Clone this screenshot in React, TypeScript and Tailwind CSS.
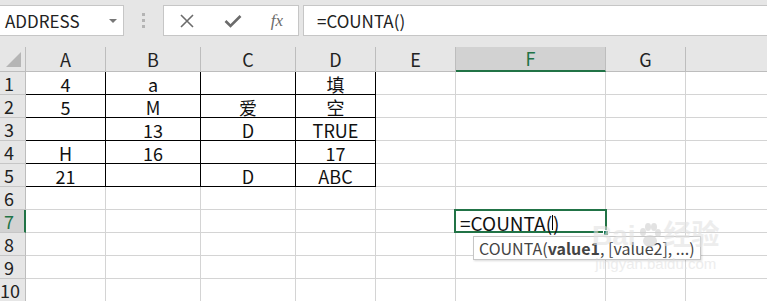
import React from "react";

const font = { fontFamily: '"Noto Sans CJK SC", "Noto Sans", sans-serif' };

const cols = ["A", "B", "C", "D", "E", "F", "G", ""];
const widths = ["w-[80px]", "w-[95px]", "w-[95px]", "w-[80px]", "w-[80px]", "w-[150px]", "w-[80px]", "w-[82px]"];

const data: string[][] = [
  ["4", "a", "", "填"],
  ["5", "M", "爱", "空"],
  ["", "13", "D", "TRUE"],
  ["H", "16", "", "17"],
  ["21", "", "D", "ABC"],
];

function Toolbar() {
  return (
    <div className="h-[47px] flex items-start pt-[5px]">
      <div className="w-[124px] h-[31px] bg-white border border-l-0 border-[#c6c6c6] flex items-center justify-between pl-[5px] pr-[6px]">
        <span className="text-[17px] text-[#222]">ADDRESS</span>
        <span className="w-0 h-0 border-l-[4px] border-r-[4px] border-t-[4px] border-l-transparent border-r-transparent border-t-[#777]" />
      </div>
      <div className="w-[39px] h-[31px] flex flex-col items-center justify-center gap-[3px]">
        <span className="w-[3px] h-[3px] bg-[#b4b4b4]" />
        <span className="w-[3px] h-[3px] bg-[#b4b4b4]" />
        <span className="w-[3px] h-[3px] bg-[#b4b4b4]" />
      </div>
      <div className="w-[136px] h-[31px] bg-white border border-[#c6c6c6] flex items-center">
        <div className="w-[45px] flex justify-center">
          <svg width="14" height="14" viewBox="0 0 14 14">
            <path d="M1 1 L13 13 M13 1 L1 13" stroke="#6b6b6b" strokeWidth="1.6" fill="none" />
          </svg>
        </div>
        <div className="w-[47px] flex justify-center">
          <svg width="18" height="14" viewBox="0 0 18 14">
            <path d="M1.5 7 L6.5 12 L16.5 2" stroke="#6b6b6b" strokeWidth="2.6" fill="none" />
          </svg>
        </div>
        <div className="w-[42px] flex justify-center">
          <span className="text-[17px] italic text-[#6b6b6b]" style={{ fontFamily: '"Liberation Serif", serif' }}>
            fx
          </span>
        </div>
      </div>
      <div className="ml-[4px] flex-1 h-[31px] bg-white border border-r-0 border-[#c6c6c6] flex items-center pl-[13px]">
        <span className="text-[17px] text-[#222]">=COUNTA()</span>
      </div>
    </div>
  );
}

function HeaderRow() {
  return (
    <div className="flex h-[25px]">
      <div className="w-[26px] shrink-0 border-r border-b border-[#bdbdbd] flex items-end justify-end pr-[4px] pb-[4px]">
        <svg width="15" height="15" viewBox="0 0 15 15">
          <path d="M15 0 L15 15 L0 15 Z" fill="#b5b5b5" />
        </svg>
      </div>
      {cols.map((c, i) =>
        c === "F" ? (
          <div key={i} className={`${widths[i]} shrink-0 bg-[#d2d2d2] border-r border-[#bdbdbd] border-b-2 border-b-[#217346] flex items-center justify-center text-[18px] text-[#217346]`}>
            {c}
          </div>
        ) : (
          <div key={i} className={`${widths[i]} shrink-0 border-r border-b border-[#bdbdbd] flex items-center justify-center text-[18px] text-[#222]`}>
            {c}
          </div>
        )
      )}
    </div>
  );
}

function SelectedCell() {
  return (
    <div className="relative h-full">
      <div className="absolute -left-[2px] -top-[2px] -right-[2px] -bottom-[1px] border-2 border-[#217346]" />
      <div className="absolute -right-[4px] -bottom-[4px] w-[6px] h-[6px] bg-[#217346] border border-white" />
      <div className="absolute left-[4px] top-0 h-[22px] flex items-center text-[19px] text-[#111] leading-none">
        <span>=COUNTA(</span>
        <span className="w-px h-[15px] bg-black" />
        <span>)</span>
      </div>
      <div className="absolute left-[17px] top-[25px] h-[24px] bg-white border border-[#c6c6c6] shadow-[1px_1px_2px_rgba(0,0,0,0.15)] flex items-center px-[5px] whitespace-nowrap text-[16px] text-[#444] z-10">
        <span>COUNTA(</span>
        <span className="font-bold">value1</span>
        <span>, [value2], ...)</span>
      </div>
    </div>
  );
}

function Row({ n }: { n: number }) {
  const vals = data[n - 1] || [];
  const sel = n === 7;
  return (
    <div className="flex h-[23px]">
      <div
        className={`w-[26px] shrink-0 border-b border-[#c6c6c6] flex items-center ${
          sel ? "bg-[#d2d2d2] border-r-2 border-r-[#217346] text-[#217346]" : "border-r border-r-[#bdbdbd] text-[#222]"
        }`}
      >
        <span className="w-[18px] text-center text-[18px] leading-none">{n}</span>
      </div>
      {cols.map((_, i) => {
        const inData = n <= 5 && i < 4;
        return (
          <div
            key={i}
            className={`${widths[i]} shrink-0 bg-white border-r border-b ${
              inData ? "border-black" : "border-[#d4d4d4]"
            } flex items-center justify-center text-[18px] text-[#111] leading-none pt-[1px]`}
          >
            {sel && i === 5 ? <div className="w-full h-full"><SelectedCell /></div> : vals[i] || ""}
          </div>
        );
      })}
    </div>
  );
}

export default function App() {
  return (
    <div className="w-[767px] h-[301px] overflow-hidden bg-[#e6e6e6] relative" style={font}>
      <Toolbar />
      <HeaderRow />
      {[1, 2, 3, 4, 5, 6, 7, 8, 9, 10].map((n) => (
        <Row key={n} n={n} />
      ))}
      {/* faint watermark */}
      <div className="absolute left-[592px] top-[222px] flex flex-col items-center pointer-events-none z-20 text-[#e2e2e2] opacity-60">
        <div className="flex items-center gap-[2px] text-[28px] font-bold leading-none" style={{ fontFamily: '"Liberation Sans", "Noto Sans CJK SC", sans-serif' }}>
          <span>Bai</span>
          <svg width="24" height="26" viewBox="0 0 24 26">
            <ellipse cx="5" cy="9" rx="3" ry="4" fill="#d0d0d0" />
            <ellipse cx="10" cy="4" rx="3" ry="4" fill="#d0d0d0" />
            <ellipse cx="16" cy="4" rx="3" ry="4" fill="#d0d0d0" />
            <ellipse cx="20" cy="10" rx="3" ry="4" fill="#d0d0d0" />
            <ellipse cx="12" cy="18" rx="7" ry="6" fill="#d0d0d0" />
          </svg>
          <span>经验</span>
        </div>
        <span className="text-[15px] leading-none mt-[6px]" style={{ fontFamily: '"Liberation Sans", sans-serif' }}>
          jingyan.baidu.com
        </span>
      </div>
    </div>
  );
}
